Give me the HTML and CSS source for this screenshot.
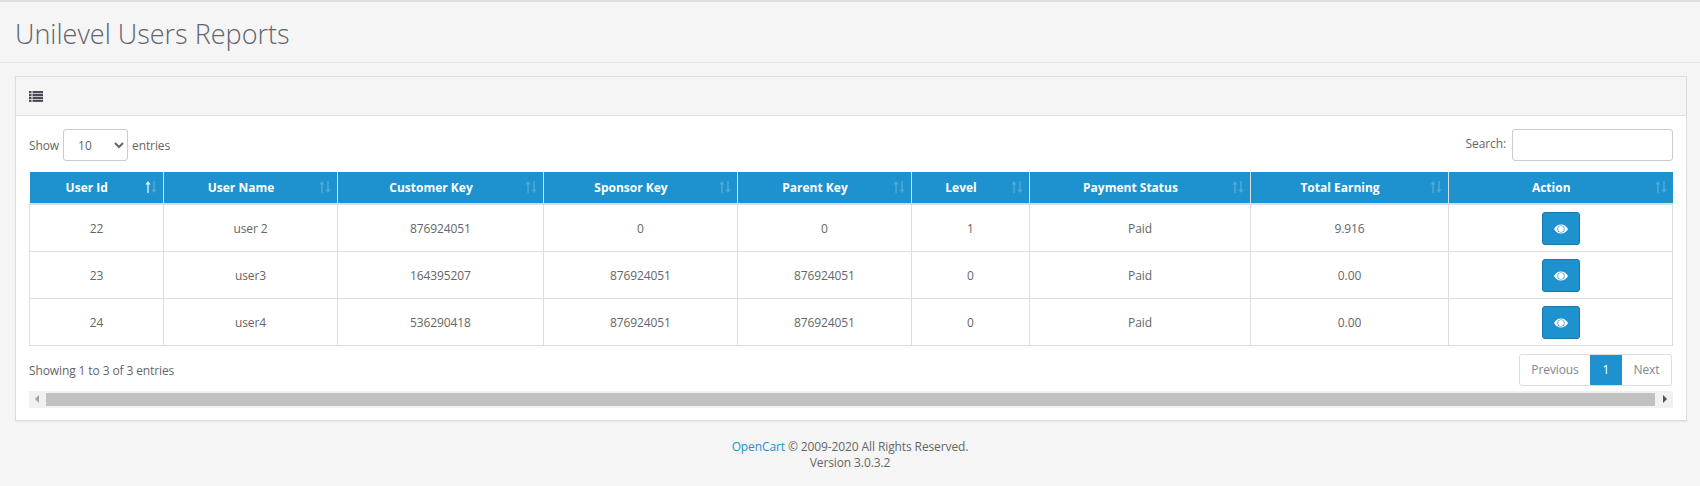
FILE: index.html
```html
<!DOCTYPE html>
<html lang="en">
<head>
  <meta charset="UTF-8" />
  <title>Unilevel Users Reports</title>
  <link rel="stylesheet" href="styles.css">
</head>
<body>
  <svg class="defs" width="0" height="0">
    <symbol id="sortUp" viewBox="0 0 6 12"><path d="M3 0 L5.6 3.5 H3.7 V12 H2.3 V3.5 H0.4 Z"/></symbol>
    <symbol id="sortDown" viewBox="0 0 6 12"><path d="M3 12 L5.6 8.5 H3.7 V0 H2.3 V8.5 H0.4 Z"/></symbol>
    <symbol id="eye" viewBox="0 0 14 10">
      <path fill-rule="evenodd" d="M7 0.5 C10.2 0.5 12.7 2.5 14 5 C12.7 7.5 10.2 9.5 7 9.5 C3.8 9.5 1.3 7.5 0 5 C1.3 2.5 3.8 0.5 7 0.5 Z M7 1.4 A3.6 3.6 0 1 0 7 8.6 A3.6 3.6 0 1 0 7 1.4 Z"/>
      <circle cx="7" cy="5" r="2.9"/>
    </symbol>
  </svg>

  <div class="page-header">
    <h1>Unilevel Users Reports</h1>
  </div>

  <div class="panel">
    <div class="panel-heading">
      <svg class="list-icon" viewBox="0 0 14 11" width="14" height="11">
        <rect x="0" y="0" width="2.5" height="2.2"/><rect x="3.5" y="0" width="10.5" height="2.2"/>
        <rect x="0" y="2.9" width="2.5" height="2.2"/><rect x="3.5" y="2.9" width="10.5" height="2.2"/>
        <rect x="0" y="5.8" width="2.5" height="2.2"/><rect x="3.5" y="5.8" width="10.5" height="2.2"/>
        <rect x="0" y="8.7" width="2.5" height="2.2"/><rect x="3.5" y="8.7" width="10.5" height="2.2"/>
      </svg>
    </div>

    <div class="panel-body">
      <div class="table-top">
        <label class="length">Show
          <select class="form-control length-select">
            <option>10</option>
            <option>25</option>
            <option>50</option>
          </select>
          entries
        </label>
        <label class="search"><span class="search-label">Search:</span> <input type="search" class="form-control search-input"></label>
      </div>

      <table class="report">
        <colgroup>
          <col class="c-id"><col class="c-name"><col class="c-customer"><col class="c-sponsor"><col class="c-parent">
          <col class="c-level"><col class="c-status"><col class="c-earning"><col class="c-action">
        </colgroup>
        <thead>
          <tr>
            <th>User Id<span class="sort"><svg class="on"><use href="#sortUp"/></svg><svg><use href="#sortDown"/></svg></span></th>
            <th>User Name<span class="sort"><svg><use href="#sortUp"/></svg><svg><use href="#sortDown"/></svg></span></th>
            <th>Customer Key<span class="sort"><svg><use href="#sortUp"/></svg><svg><use href="#sortDown"/></svg></span></th>
            <th>Sponsor Key<span class="sort"><svg><use href="#sortUp"/></svg><svg><use href="#sortDown"/></svg></span></th>
            <th>Parent Key<span class="sort"><svg><use href="#sortUp"/></svg><svg><use href="#sortDown"/></svg></span></th>
            <th>Level<span class="sort"><svg><use href="#sortUp"/></svg><svg><use href="#sortDown"/></svg></span></th>
            <th>Payment Status<span class="sort"><svg><use href="#sortUp"/></svg><svg><use href="#sortDown"/></svg></span></th>
            <th>Total Earning<span class="sort"><svg><use href="#sortUp"/></svg><svg><use href="#sortDown"/></svg></span></th>
            <th>Action<span class="sort"><svg><use href="#sortUp"/></svg><svg><use href="#sortDown"/></svg></span></th>
          </tr>
        </thead>
        <tbody>
          <tr>
            <td>22</td><td>user 2</td><td>876924051</td><td>0</td><td>0</td><td>1</td><td>Paid</td><td>9.916</td>
            <td class="action"><button class="btn"><svg class="eye"><use href="#eye"/></svg></button></td>
          </tr>
          <tr>
            <td>23</td><td>user3</td><td>164395207</td><td>876924051</td><td>876924051</td><td>0</td><td>Paid</td><td>0.00</td>
            <td class="action"><button class="btn"><svg class="eye"><use href="#eye"/></svg></button></td>
          </tr>
          <tr>
            <td>24</td><td>user4</td><td>536290418</td><td>876924051</td><td>876924051</td><td>0</td><td>Paid</td><td>0.00</td>
            <td class="action"><button class="btn"><svg class="eye"><use href="#eye"/></svg></button></td>
          </tr>
        </tbody>
      </table>

      <div class="table-bottom">
        <div class="info">Showing 1 to 3 of 3 entries</div>
        <div class="pager">
          <a class="prev">Previous</a>
          <a class="current">1</a>
          <a class="next">Next</a>
        </div>
      </div>

      <div class="scrollbar">
        <span class="arrow-left"></span>
        <div class="thumb"></div>
        <span class="arrow-right"></span>
      </div>
    </div>
  </div>

  <footer class="footer">
    <a href="#">OpenCart</a> &copy; 2009-2020 All Rights Reserved.<br>
    Version 3.0.3.2
  </footer>
</body>
</html>
```

FILE: styles.css
```css
* { box-sizing: border-box; }

html, body { height: 100%; }

body {
  margin: 0;
  font-family: "Open Sans", sans-serif;
  font-size: 12px;
  line-height: 16px;
  letter-spacing: -0.11px;
  color: #666;
  background: #f5f5f5;
  border-top: 2px solid #ddd;
  overflow: hidden;
}

.defs { display: block; height: 0; }

.page-header {
  height: 61px;
  padding: 16px 15px 0;
  border-bottom: 1px solid #e8e8e8;
}

h1 {
  margin: 0;
  font-size: 27px;
  line-height: 32px;
  font-weight: 300;
  letter-spacing: 0;
  color: #5f6470;
}

.panel {
  margin: 13px 13px 0 15px;
  border: 1px solid #ddd;
  background: #fff;
  box-shadow: 0 1px 1px rgba(0, 0, 0, .05);
}

.panel-heading {
  display: flex;
  align-items: center;
  height: 39px;
  padding-left: 13px;
  background: #f5f5f5;
  border-bottom: 1px solid #ddd;
}

.list-icon { fill: #4a4a5e; }

.panel-body { padding: 13px 13px 12px; }

.table-top {
  display: flex;
  justify-content: space-between;
  align-items: center;
  height: 32px;
  margin-bottom: 11px;
}

.search-label {
  display: inline-block;
  padding-top: 2px;
}

.form-control {
  height: 32px;
  border: 1px solid #ccc;
  border-radius: 3px;
  background: #fff;
  font: inherit;
  color: #666;
}

.length-select {
  width: 65px;
  margin: 0 1px;
  padding: 0 0 0 10px;
}

.search-input {
  width: 161px;
  margin-left: 3px;
  vertical-align: middle;
}

.report {
  width: 100%;
  table-layout: fixed;
  border-collapse: collapse;
}

.c-id { width: 134px; }
.c-name { width: 174px; }
.c-customer { width: 206px; }
.c-sponsor { width: 194px; }
.c-parent { width: 174px; }
.c-level { width: 118px; }
.c-status { width: 221px; }
.c-earning { width: 198px; }

.report th {
  position: relative;
  height: 32px;
  padding: 0 27px 0 8px;
  background: #1e91cf;
  color: #fff;
  font-weight: 700;
  letter-spacing: 0;
  border: 1px solid #ddd;
  border-top: 0;
  border-bottom: 2px solid #ddd;
}

.report th:first-child { border-left: 0; }
.report th:last-child { border-right: 0; }

.report td {
  height: 47px;
  padding: 2px 8px 0;
  text-align: center;
  border: 1px solid #ddd;
}

.report td.action { padding-top: 0; }

.sort {
  position: absolute;
  right: 6px;
  top: 9px;
  display: flex;
}

.sort svg {
  display: block;
  width: 6px;
  height: 12px;
  fill: #fff;
  opacity: .22;
}

.sort svg.on { opacity: .85; }

.btn {
  display: inline-flex;
  align-items: center;
  justify-content: center;
  width: 38px;
  height: 33px;
  padding: 0;
  margin-top: 1px;
  vertical-align: middle;
  background: #1e91cf;
  border: 1px solid #1978ab;
  border-radius: 3px;
}

.eye {
  width: 14px;
  height: 10px;
  margin-top: 2px;
  fill: #fff;
}

.table-bottom {
  display: flex;
  justify-content: space-between;
  align-items: center;
  margin-top: 8px;
  padding-right: 1px;
}

.info { padding-top: 2px; }

.pager {
  display: flex;
  height: 32px;
  border: 1px solid #ddd;
  border-radius: 3px;
  overflow: hidden;
  color: #80878f;
}

.pager a {
  display: flex;
  align-items: center;
  justify-content: center;
  padding-top: 1px;
}

.prev { width: 70px; }
.next { width: 49px; }

.pager .current {
  width: 32px;
  margin: -1px 0;
  background: #1e91cf;
  color: #fff;
}

.scrollbar {
  display: flex;
  align-items: center;
  height: 17px;
  margin-top: 5px;
  padding: 0 6px;
  background: #f1f1f1;
}

.thumb {
  flex: 1;
  height: 13px;
  margin: 0 8px 0 7px;
  background: #c1c1c1;
}

.arrow-left, .arrow-right {
  width: 0;
  height: 0;
  border-top: 4px solid transparent;
  border-bottom: 4px solid transparent;
}

.arrow-left { border-right: 4px solid #a3a3a3; }
.arrow-right { border-left: 4px solid #505050; }

.footer {
  margin-top: 18px;
  text-align: center;
}

.footer a {
  color: #1e91cf;
  text-decoration: none;
}
```
